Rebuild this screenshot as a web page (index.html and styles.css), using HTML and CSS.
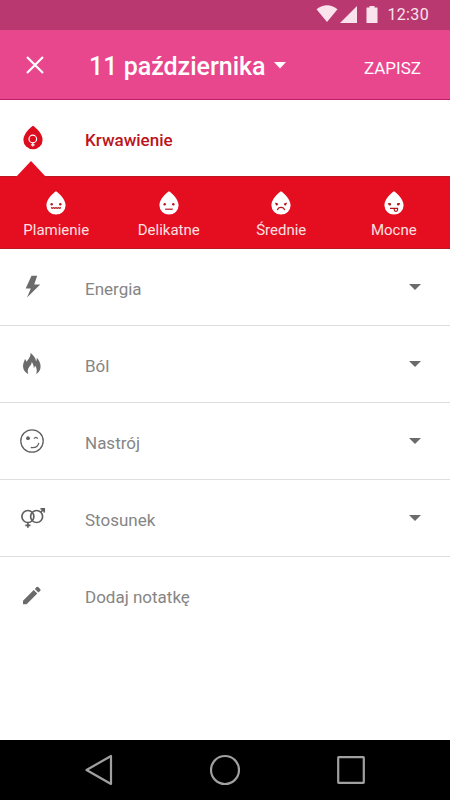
FILE: index.html
```
<!DOCTYPE html>
<html lang="pl">
<head>
    <meta charset="UTF-8">
    <meta name="viewport" content="width=device-width, initial-scale=1.0">
    <title>11 października</title>
    <link rel="stylesheet" href="styles.css">
</head>
<body>

    <div class="status-bar">
        <svg class="wifi" width="22" height="18" viewBox="0 0 22 18"><path d="M.5 4.2Q11-3.800 21.500 4.200L11 17z"/></svg>
        <svg class="signal" width="17" height="17" viewBox="0 0 17 17"><path d="M17 0v17H0z"/></svg>
        <svg class="battery" width="12" height="17" viewBox="0 0 12 17"><path d="M3.500 0h5v1.500H11q.5 0 .5.500v14.500q0 .5-.5.500H1q-.5 0-.5-.5V2q0-.5.5-.5h2.500z"/></svg>
        <span class="clock">12:30</span>
    </div>

    <header class="app-bar">
        <svg class="close" width="18" height="18" viewBox="0 0 18 18"><path d="M1 1l16 16M17 1L1 17"/></svg>
        <h1>11 października</h1>
        <svg class="caret" width="12" height="7" viewBox="0 0 12 7"><path d="M0 0h12L6 6.500z"/></svg>
        <button class="save">ZAPISZ</button>
    </header>

    <main>
        <div class="row active">
            <svg class="icon" viewBox="0 0 32 32">
                <path d="M17 3.800C19.500 5.500 26.600 11.500 26.600 18a9.600 9.300 0 0 1-19.200 0C7.400 11.500 14.500 5.500 17 3.800z"/>
                <g class="mark"><circle cx="16.800" cy="17" r="3.800"/><path d="M16.800 20.800v3.700M14.900 22.800h3.800"/></g>
            </svg>
            <span class="label">Krwawienie</span>
            <span class="pointer"></span>
        </div>

        <div class="flow-options">
            <div class="option">
                <svg width="20" height="24" viewBox="0 0 20 24">
                    <path d="M10 .3C12.500 2 19.600 8 19.600 14.300a9.600 9.300 0 0 1-19.200 0C.4 8 7.500 2 10 .3z"/>
                    <g class="eyes"><circle cx="5.700" cy="13.200" r="1.200"/><circle cx="14.300" cy="13.200" r="1.200"/></g>
                    <path class="mouth" d="M5 16.500l1.200.8 1.300-.6 1.300.6 1.200-.6 1.200.6 1.300-.6 1.300.6 1.200-.8"/>
                </svg>
                <span>Plamienie</span>
            </div>
            <div class="option">
                <svg width="20" height="24" viewBox="0 0 20 24">
                    <path d="M10 .3C12.500 2 19.600 8 19.600 14.300a9.600 9.300 0 0 1-19.200 0C.4 8 7.500 2 10 .3z"/>
                    <g class="eyes"><circle cx="5.700" cy="13.200" r="1.200"/><circle cx="14.300" cy="13.200" r="1.200"/></g>
                    <path class="mouth" d="M6.200 18.200h7.600"/>
                </svg>
                <span>Delikatne</span>
            </div>
            <div class="option">
                <svg width="20" height="24" viewBox="0 0 20 24">
                    <path d="M10 .3C12.500 2 19.600 8 19.600 14.300a9.600 9.300 0 0 1-19.200 0C.4 8 7.500 2 10 .3z"/>
                    <g class="eyes"><circle cx="5.700" cy="13.500" r="1.100"/><circle cx="14.300" cy="13.500" r="1.100"/></g>
                    <path class="mouth" d="M4.200 12l2.800 1.300M15.800 12L13 13.300M6.300 19.200q.8-2.900 3.700-2.900t3.700 2.900"/>
                </svg>
                <span>Średnie</span>
            </div>
            <div class="option">
                <svg width="20" height="24" viewBox="0 0 20 24">
                    <path d="M10 .3C12.500 2 19.600 8 19.600 14.300a9.600 9.300 0 0 1-19.200 0C.4 8 7.500 2 10 .3z"/>
                    <g class="eyes"><circle cx="5.800" cy="13.300" r="1.200"/><circle cx="14.200" cy="13.300" r="1.200"/></g>
                    <path class="mouth" d="M4 12.500l3 1M16 12.500l-3 1M6 17.300h8.200M10.200 17.300v1.200q0 1.800 1.700 1.800t1.700-1.800v-1.200"/>
                </svg>
                <span>Mocne</span>
            </div>
        </div>

        <div class="row">
            <svg class="icon" viewBox="0 0 32 32"><path d="M15.500 4.800h5.700l-3 8.800h6L11 26.400l3.800-8.900H9.700z"/></svg>
            <span class="label">Energia</span>
            <svg class="arrow" viewBox="0 0 12 6"><path d="M0 0h12L6 6z"/></svg>
        </div>
        <div class="row">
            <svg class="icon" viewBox="0 0 32 32"><path d="M14.700 4.500C16 7 19.500 8.500 20 13.200 20.800 12.300 20.900 11 20.700 9.500 23 12 24.600 15 24.600 18.500c0 3.500-1.800 6.200-4.300 7.500.8-3 .7-6-1.300-8.500-.2 1.300-.5 2-1.200 2.500-.1-2.500-.8-4.500-2.100-6 .1 3-2.900 4.500-3.700 7.500-.4 1.600-.2 3.200.4 4.700C9.300 24.800 7 22 7 18.300c0-3.300 1.500-5.300 2-7.300.8.800 1.200 1.700 1.300 2.800C12.500 11.500 14.800 8.300 14.700 4.500z"/></svg>
            <span class="label">Ból</span>
            <svg class="arrow" viewBox="0 0 12 6"><path d="M0 0h12L6 6z"/></svg>
        </div>
        <div class="row">
            <svg class="icon outline" viewBox="0 0 32 32"><circle cx="16" cy="16" r="11.200"/><circle class="dot" cx="12" cy="13.200" r="1.900"/><path d="M18 13.700q1.900-2.500 3.800 0M14.800 22.500q6.800 1 8-4.700"/></svg>
            <span class="label">Nastrój</span>
            <svg class="arrow" viewBox="0 0 12 6"><path d="M0 0h12L6 6z"/></svg>
        </div>
        <div class="row">
            <svg class="icon outline bold" viewBox="0 0 32 32"><circle cx="11.900" cy="14.500" r="6"/><circle cx="20.600" cy="14.500" r="6"/><path d="M11.900 20.500v5.200M9.300 23.300h5.200M24.800 10.200L28 7M24.500 6.800h3.700v3.700"/></svg>
            <span class="label">Stosunek</span>
            <svg class="arrow" viewBox="0 0 12 6"><path d="M0 0h12L6 6z"/></svg>
        </div>
        <div class="row note">
            <svg class="icon" viewBox="0 0 32 32"><path d="M7 24.300v-3.600L17.700 10l3.600 3.600L10.600 24.300zM18.800 8.900L20.600 7.100q.8-.7 1.600 0l2.100 2.100q.7.800 0 1.600l-1.900 1.800z"/></svg>
            <span class="label">Dodaj notatkę</span>
        </div>
    </main>

    <nav class="nav-bar">
        <svg width="30" height="32" viewBox="0 0 30 32"><path d="M27 2v28L2.500 16z"/></svg>
        <svg width="30" height="32" viewBox="0 0 30 32"><circle cx="15" cy="16" r="14"/></svg>
        <svg width="30" height="32" viewBox="0 0 30 32"><rect x="2.200" y="3.200" width="25.600" height="25.600" rx=".5"/></svg>
    </nav>

</body>
</html>
```
FILE: styles.css
```
* {
    box-sizing: border-box;
}
body {
    margin: 0;
    height: 800px;
    display: flex;
    flex-direction: column;
    font-family: Roboto, sans-serif;
    background-color: #fff;
    overflow: hidden;
}
svg {
    display: block;
    flex-shrink: 0;
}

/* Status bar */
.status-bar {
    height: 30px;
    display: flex;
    align-items: center;
    justify-content: flex-end;
    padding: 0 21px 2px 0;
    background-color: #b8386f;
    color: #fbe3ee;
    fill: #fbe3ee;
}
.signal {
    margin-left: 2px;
}
.battery {
    margin: 0 9px 0 9px;
}
.clock {
    font-size: 16px;
    letter-spacing: 0.35px;
}

/* App bar */
.app-bar {
    height: 70px;
    display: flex;
    align-items: center;
    padding: 0 29px 0 26px;
    background-color: #e8468d;
    border-bottom: 1px solid #c01c6c;
    color: #fff;
}
.close {
    stroke: #fff;
    stroke-width: 2.200;
}
h1 {
    margin: 3px 8px 0 45px;
    font-size: 25px;
    font-weight: 500;
}
.caret {
    margin-top: 2px;
    fill: #fff;
}
.save {
    margin: 7px 0 0 auto;
    padding: 0;
    border: none;
    background: none;
    color: #fff;
    font-family: inherit;
    font-size: 17px;
    cursor: pointer;
}

/* Rows */
main {
    flex: 1;
}
.row {
    position: relative;
    height: 77px;
    display: flex;
    align-items: center;
    padding: 0 29px 0 16px;
    border-bottom: 1px solid #dedede;
    color: #858585;
    fill: #6b6b6b;
}
.icon {
    width: 32px;
    height: 32px;
}
.label {
    flex: 1;
    margin: 3px 0 0 37px;
    font-size: 17px;
}
.arrow {
    width: 12px;
    height: 6px;
}
.outline {
    fill: none;
    stroke: #606060;
    stroke-width: 1.300;
}
.bold {
    stroke-width: 1.700;
}
.dot {
    fill: #606060;
    stroke: none;
}
.note {
    border-bottom: none;
}
.active {
    height: 76px;
    border-bottom: none;
    color: #bb1420;
    fill: #dc0d1e;
}
.active .label {
    font-weight: 500;
}
.pointer {
    position: absolute;
    left: 16px;
    bottom: -1px;
    border: 15px solid transparent;
    border-top: none;
    border-bottom: 16px solid #e50d20;
}
.mark {
    fill: none;
    stroke: #fff;
    stroke-width: 1.200;
}

/* Flow options */
.flow-options {
    height: 73px;
    display: grid;
    grid-template-columns: repeat(4, 1fr);
    background-color: #e50d20;
    border-top: 1px solid #bd1824;
    border-bottom: 1px solid #bd1824;
}
.option {
    display: flex;
    flex-direction: column;
    align-items: center;
    padding-top: 14px;
    color: #fde0e0;
    font-size: 15px;
    fill: #fff;
}
.option span {
    margin-top: 6px;
}
.eyes {
    fill: #b5121b;
}
.mouth {
    fill: none;
    stroke: #b5121b;
    stroke-width: 1.200;
}

/* Navigation bar */
.nav-bar {
    height: 60px;
    display: flex;
    align-items: center;
    justify-content: space-between;
    padding: 0 84px;
    background-color: #000;
    fill: none;
    stroke: #a0a0a0;
    stroke-width: 2.200;
    stroke-linejoin: round;
}
```
